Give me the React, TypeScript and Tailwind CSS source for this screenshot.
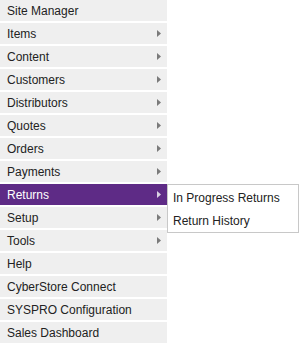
const items = [
  { label: 'Site Manager', sub: false },
  { label: 'Items', sub: true },
  { label: 'Content', sub: true },
  { label: 'Customers', sub: true },
  { label: 'Distributors', sub: true },
  { label: 'Quotes', sub: true },
  { label: 'Orders', sub: true },
  { label: 'Payments', sub: true },
  { label: 'Returns', sub: true, active: true },
  { label: 'Setup', sub: true },
  { label: 'Tools', sub: true },
  { label: 'Help', sub: false },
  { label: 'CyberStore Connect', sub: false },
  { label: 'SYSPRO Configuration', sub: false },
  { label: 'Sales Dashboard', sub: false },
]

function Arrow({ light }: { light?: boolean }) {
  return (
    <svg width="4" height="7" viewBox="0 0 4 7" className="shrink-0">
      <path d="M0 0 L4 3.5 L0 7 Z" fill={light ? '#d9d2e3' : '#7a7a7a'} />
    </svg>
  )
}

export default function App() {
  return (
    <div className="w-[299px] h-[344px] bg-white overflow-hidden text-[12px] font-['Liberation_Sans',Arial,sans-serif]">
      <ul className="w-[167px] flex flex-col gap-[2px]">
        {items.map((item) => (
          <li
            key={item.label}
            className={
              'relative h-[21px] flex items-center justify-between pl-[7px] pr-[6px] ' +
              (item.active ? 'bg-[#5e2b86] text-white' : 'bg-[#efefef] text-[#222]')
            }
          >
            <span>{item.label}</span>
            {item.sub && <Arrow light={item.active} />}
            {/* submenu flyout */}
            {item.active && (
              <div className="absolute left-[167px] top-0 w-[132px] bg-white border border-[#c8c8c8] text-[#222] pt-[1px]">
                <div className="h-[23px] flex items-center pl-[5px]">In Progress Returns</div>
                <div className="h-[23px] flex items-center pl-[5px]">Return History</div>
              </div>
            )}
          </li>
        ))}
      </ul>
    </div>
  )
}
